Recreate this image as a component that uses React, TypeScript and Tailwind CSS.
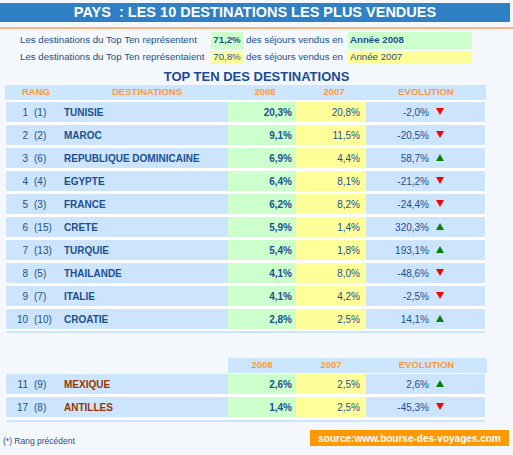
import React from "react"

type Row = {
  rank: string
  prev: string
  name: string
  v2008: string
  v2007: string
  evo: string
  up: boolean
}

const topTen: Row[] = [
  { rank: "1", prev: "(1)", name: "TUNISIE", v2008: "20,3%", v2007: "20,8%", evo: "-2,0%", up: false },
  { rank: "2", prev: "(2)", name: "MAROC", v2008: "9,1%", v2007: "11,5%", evo: "-20,5%", up: false },
  { rank: "3", prev: "(6)", name: "REPUBLIQUE DOMINICAINE", v2008: "6,9%", v2007: "4,4%", evo: "58,7%", up: true },
  { rank: "4", prev: "(4)", name: "EGYPTE", v2008: "6,4%", v2007: "8,1%", evo: "-21,2%", up: false },
  { rank: "5", prev: "(3)", name: "FRANCE", v2008: "6,2%", v2007: "8,2%", evo: "-24,4%", up: false },
  { rank: "6", prev: "(15)", name: "CRETE", v2008: "5,9%", v2007: "1,4%", evo: "320,3%", up: true },
  { rank: "7", prev: "(13)", name: "TURQUIE", v2008: "5,4%", v2007: "1,8%", evo: "193,1%", up: true },
  { rank: "8", prev: "(5)", name: "THAILANDE", v2008: "4,1%", v2007: "8,0%", evo: "-48,6%", up: false },
  { rank: "9", prev: "(7)", name: "ITALIE", v2008: "4,1%", v2007: "4,2%", evo: "-2,5%", up: false },
  { rank: "10", prev: "(10)", name: "CROATIE", v2008: "2,8%", v2007: "2,5%", evo: "14,1%", up: true },
]

const others: Row[] = [
  { rank: "11", prev: "(9)", name: "MEXIQUE", v2008: "2,6%", v2007: "2,5%", evo: "2,6%", up: true },
  { rank: "17", prev: "(8)", name: "ANTILLES", v2008: "1,4%", v2007: "2,5%", evo: "-45,3%", up: false },
]

function Arrow({ up }: { up: boolean }) {
  return up ? (
    <svg width="8" height="7" viewBox="0 0 8 7" className="ml-[7px] -mt-[1px]">
      <polygon points="4,0 8,7 0,7" fill="#0a7f0a" />
    </svg>
  ) : (
    <svg width="8" height="7" viewBox="0 0 8 7" className="ml-[7px] -mt-[1px]">
      <polygon points="0,0 8,0 4,7" fill="#ff0000" />
    </svg>
  )
}

function DataRow({ row, other }: { row: Row; other?: boolean }) {
  return (
    <div className="mx-[1px] flex h-[20px] text-[10px] text-[#1d4f91]">
      <div className="flex w-[222px] items-center bg-[#cce5fc]">
        <span className="w-[22px] text-right">{row.rank}</span>
        <span className="ml-[6px] w-[30px]">{row.prev}</span>
        <span className={other ? "font-bold text-[#993300]" : "font-bold"}>{row.name}</span>
      </div>
      <div className="flex w-[68px] items-center justify-end bg-[#ccffcc] pr-[4px] font-bold">{row.v2008}</div>
      <div className="flex w-[70px] items-center justify-end bg-[#ffff99] pr-[6px]">{row.v2007}</div>
      <div className="flex w-[119px] items-center bg-[#cce5fc]">
        <span className="w-[63px] text-right">{row.evo}</span>
        <Arrow up={row.up} />
      </div>
    </div>
  )
}

export default function App() {
  return (
    <div className="h-[455px] w-[513px] overflow-hidden bg-[#f4f8fc] font-['Liberation_Sans',Arial,sans-serif]">
      {/* title bar */}
      <div className="mt-[3px] flex h-[19px] w-[510px] items-center justify-center bg-[#2f80c4] text-[14.5px] font-bold whitespace-pre text-white">
        PAYS  : LES 10 DESTINATIONS LES PLUS VENDUES
      </div>
      <div className="mt-[5px] h-[2px] bg-[#f7b27d]" />

      {/* summary */}
      <div className="mt-[3px] flex h-[17px] items-center text-[9.7px] whitespace-nowrap text-[#1d4f91]">
        <div className="ml-[20px] w-[191px]">Les destinations du Top Ten représentent</div>
        <div className="flex h-full w-[32px] items-center justify-center bg-[#ccffcc] font-bold">71,2%</div>
        <div className="ml-[3px] w-[102px]">des séjours vendus en</div>
        <div className="flex h-full w-[124px] items-center bg-[#ccffcc] pl-[2px] font-bold">Année 2008</div>
      </div>
      <div className="mt-[2px] flex h-[13px] items-center text-[9.7px] whitespace-nowrap text-[#1d4f91]">
        <div className="ml-[20px] w-[191px]">Les destinations du Top Ten représentaient</div>
        <div className="flex h-full w-[32px] items-center justify-center bg-[#ffff99]">70,8%</div>
        <div className="ml-[3px] w-[102px]">des séjours vendus en</div>
        <div className="flex h-full w-[124px] items-center bg-[#ffff99] pl-[2px]">Année 2007</div>
      </div>

      <div className="flex h-[21px] items-center justify-center pt-[4px] text-[13px] font-bold text-[#1a4a9a]">
        TOP TEN DES DESTINATIONS
      </div>

      {/* top ten table */}
      <div className="ml-[5px] w-[481px] bg-white">
        <div className="flex h-[15px] items-center bg-[#cce6ff] text-[9.5px] font-bold text-[#ff9933]">
          <div className="w-[61px] pl-[1px] text-center">RANG</div>
          <div className="w-[162px] text-center">DESTINATIONS</div>
          <div className="w-[68px] pl-[6px] text-center">2008</div>
          <div className="w-[70px] pl-[6px] text-center">2007</div>
          <div className="w-[120px] text-center">EVOLUTION</div>
        </div>
        <div className="mt-[2px] flex flex-col gap-[3px]">
          {topTen.map((row) => (
            <DataRow key={row.name} row={row} />
          ))}
        </div>
        <div className="mx-[1px] mt-[2px] h-[2px] bg-[#cce5fc]" />
      </div>

      {/* other destinations */}
      <div className="mt-[25px] ml-[5px] w-[482px]">
        <div className="ml-[223px] flex h-[15px] w-[259px] items-center bg-[#cce6ff] text-[9.5px] font-bold text-[#ff9933]">
          <div className="w-[68px] text-center">2008</div>
          <div className="w-[70px] text-center">2007</div>
          <div className="w-[121px] text-center">EVOLUTION</div>
        </div>
        <div className="w-[481px] bg-white pt-[1px]">
          <div className="flex flex-col gap-[3px]">
            {others.map((row) => (
              <DataRow key={row.name} row={row} other />
            ))}
          </div>
          <div className="mx-[1px] mt-[3px] h-[2px] bg-[#cce5fc]" />
        </div>
      </div>

      {/* footer */}
      <div className="mt-[8px] flex h-[16px] justify-between">
        <div className="mt-[6px] ml-[3px] text-[8.5px] leading-[10px] text-[#1d4f91]">(*) Rang précédent</div>
        <div className="mr-[4px] flex w-[199px] items-center justify-center bg-[#ff9900] text-[10px] font-bold text-white">
          source:www.bourse-des-voyages.com
        </div>
      </div>
      <div className="mt-[9px] h-[2px] bg-[#f7b27d]" />
    </div>
  )
}
